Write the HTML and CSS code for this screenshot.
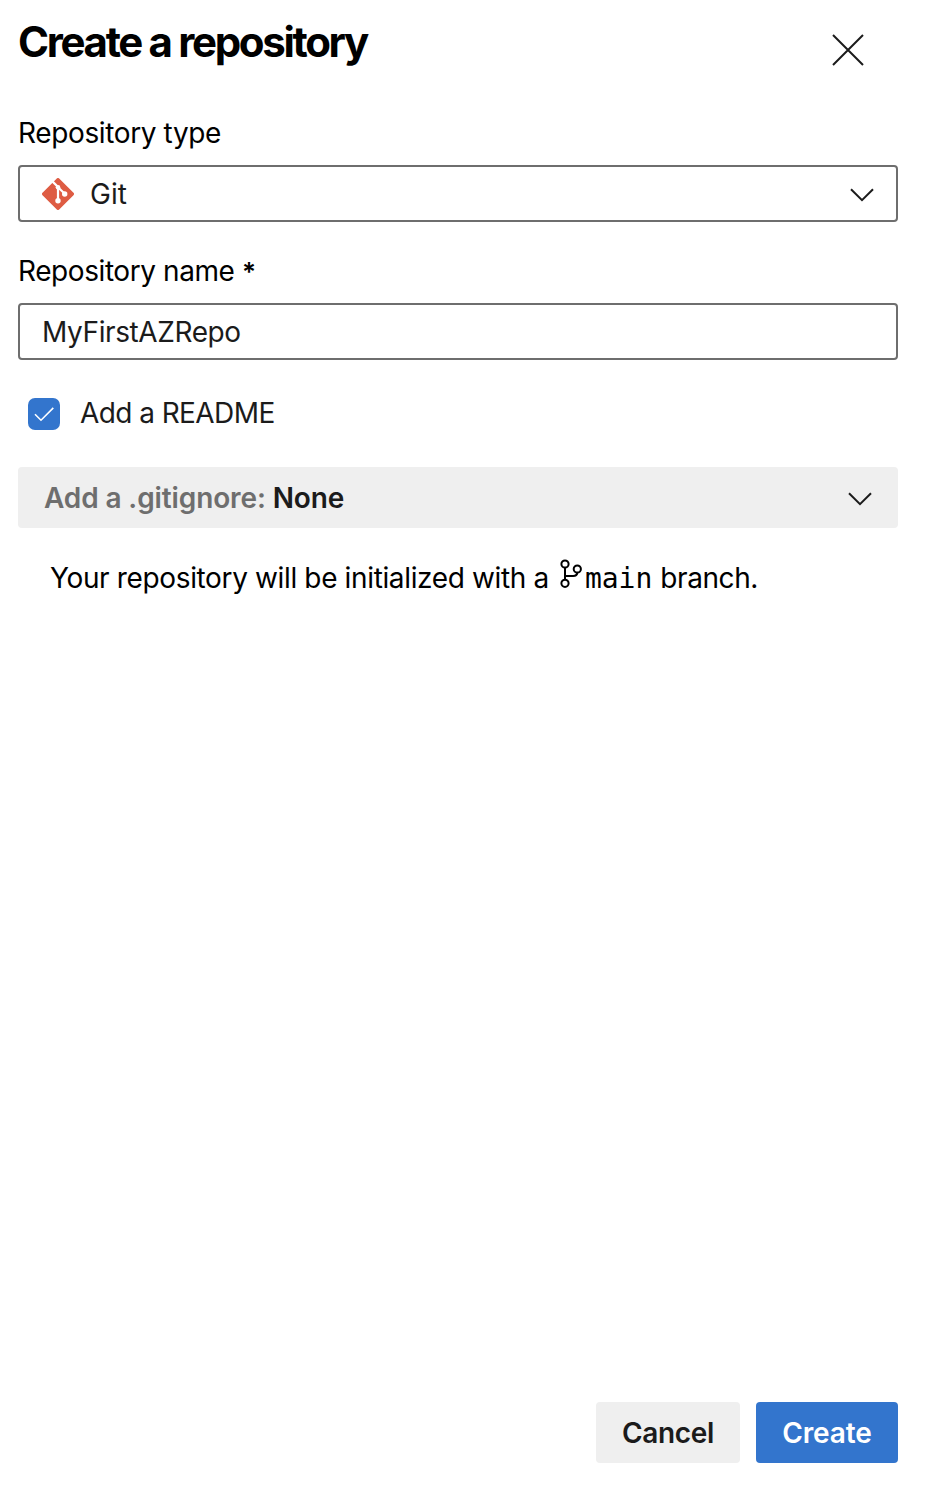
FILE: index.html
```html
<!DOCTYPE html>
<html lang="en">
<head>
<meta charset="utf-8">
<title>Create a repository</title>
<link rel="stylesheet" href="styles.css">
</head>
<body>
<form class="panel">
  <header class="panel-header">
    <h1 class="title">Create a repository</h1>
    <svg class="close" viewBox="0 0 32 32" role="img" aria-label="Close"><path d="M1 1 31 31M31 1 1 31"/></svg>
  </header>

  <div class="label label-type">Repository type</div>
  <div class="field">
    <svg class="git-logo" viewBox="0 0 32 32">
      <rect class="git-body" x="4.2" y="4.2" width="23.6" height="23.6" rx="1.7" transform="rotate(45 16 16)"/>
      <path class="git-line" d="M10.4 3.4 16 9V23M16 9.2 23 16"/>
      <circle class="git-dot" cx="16" cy="9.2" r="2.3"/>
      <circle class="git-dot" cx="16" cy="22.8" r="2.7"/>
      <circle class="git-dot" cx="22.7" cy="16" r="2.7"/>
    </svg>
    <span class="git-name">Git</span>
    <svg class="chevron" viewBox="0 0 24 14"><path d="M1 1.2 12 12.2 23 1.2"/></svg>
  </div>

  <div class="label label-name">Repository name <span class="required">*</span></div>
  <div class="field"><span class="repo-name">MyFirstAZRepo</span></div>

  <div class="readme">
    <span class="checkbox"><svg class="check" viewBox="0 0 32 32"><path d="M7 16.2 13 22.2 25.3 9.9"/></svg></span>
    <span class="readme-text">Add a README</span>
  </div>

  <div class="ignore">
    <span class="ignore-text"><span class="muted">Add a .gitignore:</span> None</span>
    <svg class="chevron" viewBox="0 0 24 14"><path d="M1 1.2 12 12.2 23 1.2"/></svg>
  </div>

  <div class="note">
    <span class="note-start">Your repository will be initialized with a</span>
    <svg class="branch" viewBox="0 0 22 30"><circle cx="5" cy="5" r="3.6"/><circle cx="17.3" cy="10" r="3.6"/><circle cx="5" cy="24.3" r="3.6"/><path d="M5 8.6V20.7M5 17H13.2Q17 17 17.3 13.6"/></svg>
    <code class="branch-name">main</code>
    <span class="note-end">branch.</span>
  </div>

  <footer class="actions">
    <button class="button cancel" type="button">Cancel</button>
    <button class="button create" type="button">Create</button>
  </footer>
</form>
</body>
</html>
```
FILE: styles.css
```css
* { box-sizing: border-box; }
body {
  margin: 0;
  background: #fff;
  color: #000;
  font: 400 28px/34px Inter, "Liberation Sans", sans-serif;
  white-space: nowrap;
}
svg { display: block; fill: none; stroke: #1b1b1b; stroke-width: 2; flex: none; }
.panel {
  display: flex;
  flex-direction: column;
  height: 1490px;
  padding: 17px 32px 27px 18px;
}
.panel-header { display: flex; justify-content: space-between; height: 99px; padding-right: 34px; }
.title { margin: 0; font-size: 42px; line-height: 50px; font-weight: 700; letter-spacing: -2.33px; }
.close { width: 32px; height: 32px; margin-top: 17px; }
.label { height: 34px; }
.label-type { letter-spacing: -0.37px; }
.label-name { margin-top: 32px; letter-spacing: -0.42px; }
.required { font-weight: 600; font-size: 26px; }
.field {
  display: flex;
  align-items: center;
  height: 57px;
  margin-top: 15px;
  padding: 0 22px;
  border: 2px solid #6e6e6e;
  border-radius: 4px;
  color: #1b1b1b;
}
.git-logo { width: 32px; height: 32px; margin-right: 16px; }
.git-body { fill: #de5c43; stroke: none; }
.git-line { stroke: #fff; stroke-width: 2.2; }
.git-dot { fill: #fff; stroke: none; }
.git-name { letter-spacing: 0; }
.repo-name { letter-spacing: -0.4px; }
.chevron { width: 24px; height: 14px; margin: 2px 0 0 auto; }
.readme { display: flex; align-items: center; gap: 20px; height: 34px; margin: 37px 0 0 10px; color: #1b1b1b; }
.checkbox { width: 32px; height: 32px; border-radius: 7px; background: #3375cd; }
.check { stroke: #fff; stroke-width: 1.6; }
.readme-text { padding-bottom: 2px; letter-spacing: -0.57px; }
.ignore {
  display: flex;
  align-items: center;
  height: 61px;
  margin-top: 36px;
  padding: 0 26px;
  border-radius: 4px;
  background: #efefef;
  color: #1b1b1b;
  font-weight: 600;
}
.ignore-text { letter-spacing: -0.12px; }
.muted { color: #6e6e6e; }
.note { display: flex; height: 34px; margin: 33px 0 0 32px; }
.note-start { letter-spacing: -0.36px; }
.branch { width: 22px; height: 30px; margin: -2px 3px 0 11px; stroke: #000; }
.branch-name { font: 28px/34px "DejaVu Sans Mono", monospace; padding-top: 1px; }
.note-end { margin-left: 8px; letter-spacing: -0.42px; }
.actions { display: flex; justify-content: flex-end; gap: 16px; margin-top: auto; }
.button { height: 61px; padding: 0; border: 0; border-radius: 4px; font: 600 28px/34px Inter, sans-serif; letter-spacing: -0.3px; }
.cancel { width: 144px; background: #efefef; color: #1b1b1b; }
.create { width: 142px; background: #3375cd; color: #fff; letter-spacing: -0.1px; }
```
